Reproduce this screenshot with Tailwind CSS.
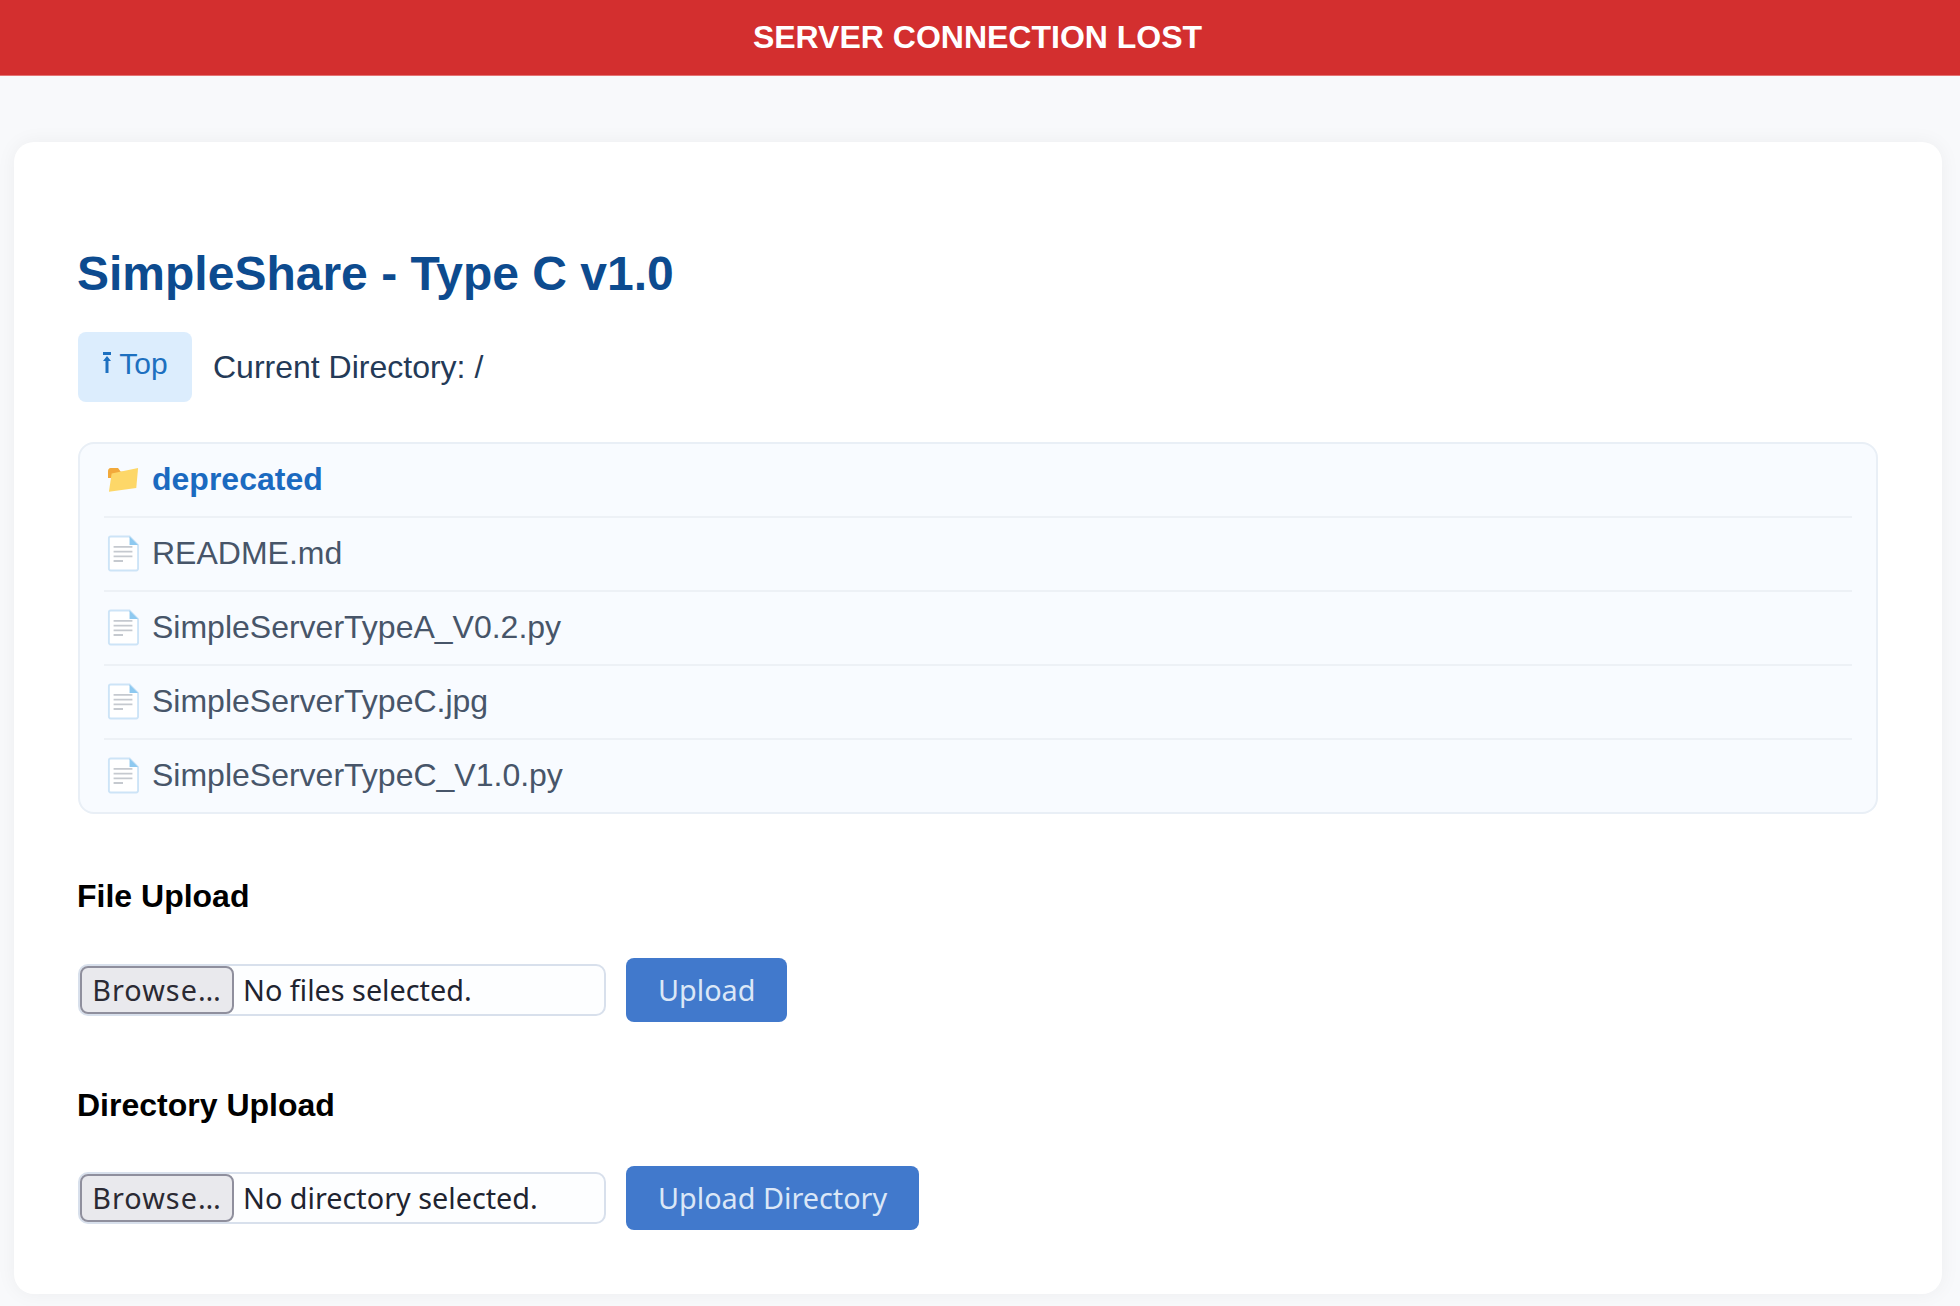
<!DOCTYPE html>
<html lang="en">
<head>
    <meta charset="UTF-8">
    <meta name="viewport" content="width=device-width, initial-scale=1.0">
    <title>SimpleShare - Type C v1.0</title>
    <script src="https://cdn.jsdelivr.net/npm/@tailwindcss/browser@4"></script>
</head>
<body class="bg-[#f8f9fb] font-['Liberation_Sans',sans-serif] h-[1306px] overflow-hidden">
    <div class="h-[76px] bg-[#d32f2f] border-b border-[#e57373] flex items-center justify-center pr-[5px] pb-[2px] text-white font-bold text-[32px]">SERVER CONNECTION LOST</div>

    <div class="ml-[14px] mr-[18px] mt-[66px] h-[1152px] bg-white rounded-[20px] shadow-[0_0_20px_rgba(0,0,0,0.05)] px-[64px] pt-[104px]">
        <h1 class="-ml-[1px] text-[#0d4b8f] font-bold text-[48px] leading-[56px]">SimpleShare - Type C v1.0</h1>

        <div class="flex items-center mt-[30px]">
            <a class="w-[114px] h-[70px] bg-[#dcedfd] rounded-lg flex items-center justify-center gap-[7px] pb-[8px] text-[#1d70c0] text-[30px]">
                <svg class="w-[10px] h-[22px]" viewBox="0 0 10 22" fill="#1d70c0"><rect x="1" y="0" width="8" height="3"/><path d="M5 4 9 9H6.5V21H3.5V9H1Z"/></svg>
                <span>Top</span>
            </a>
            <span class="ml-[21px] text-[#243a57] text-[32px]">Current Directory: /</span>
        </div>

        <div class="mt-[40px] h-[372px] bg-[#f8fbff] border-2 border-[#e9eff6] rounded-[16px] px-[24px]">
            <div class="h-[74px] pb-[3px] border-b-2 border-[#edf1f6] flex items-center gap-[12px]">
                <svg class="w-[31px] h-[30px] ml-[4px] mr-[1px]" viewBox="0 0 34 30"><path d="M0 7 Q0 3 3 3H11L14 7H30V14H0Z" fill="#f2a93b"/><path d="M4 9 33 3 31 25 1 29Z" fill="#fdd768"/></svg>
                <span class="text-[#1b6ac0] font-bold text-[32px]">deprecated</span>
            </div>
            <div class="h-[74px] pb-[2px] border-b-2 border-[#edf1f6] flex items-center gap-[12px]">
                <svg class="w-[32px] h-[37px] ml-[3px] mr-[1px]" viewBox="0 0 34 38"><path d="M2 3Q2 1 4 1H24L33 10V35Q33 37 31 37H4Q2 37 2 35Z" fill="#fff" stroke="#cde4f7" stroke-width="2"/><path d="M24 1 33 10H24Z" fill="#8ec9f0"/><path d="M7 12H27M7 17H27M7 22H27M7 27H17" stroke="#c5c9cf" stroke-width="2"/></svg>
                <span class="text-[#475569] text-[32px]">README.md</span>
            </div>
            <div class="h-[74px] pb-[2px] border-b-2 border-[#edf1f6] flex items-center gap-[12px]">
                <svg class="w-[32px] h-[37px] ml-[3px] mr-[1px]" viewBox="0 0 34 38"><path d="M2 3Q2 1 4 1H24L33 10V35Q33 37 31 37H4Q2 37 2 35Z" fill="#fff" stroke="#cde4f7" stroke-width="2"/><path d="M24 1 33 10H24Z" fill="#8ec9f0"/><path d="M7 12H27M7 17H27M7 22H27M7 27H17" stroke="#c5c9cf" stroke-width="2"/></svg>
                <span class="text-[#475569] text-[32px]">SimpleServerTypeA_V0.2.py</span>
            </div>
            <div class="h-[74px] pb-[2px] border-b-2 border-[#edf1f6] flex items-center gap-[12px]">
                <svg class="w-[32px] h-[37px] ml-[3px] mr-[1px]" viewBox="0 0 34 38"><path d="M2 3Q2 1 4 1H24L33 10V35Q33 37 31 37H4Q2 37 2 35Z" fill="#fff" stroke="#cde4f7" stroke-width="2"/><path d="M24 1 33 10H24Z" fill="#8ec9f0"/><path d="M7 12H27M7 17H27M7 22H27M7 27H17" stroke="#c5c9cf" stroke-width="2"/></svg>
                <span class="text-[#475569] text-[32px]">SimpleServerTypeC.jpg</span>
            </div>
            <div class="h-[72px] pb-[2px] flex items-center gap-[12px]">
                <svg class="w-[32px] h-[37px] ml-[3px] mr-[1px]" viewBox="0 0 34 38"><path d="M2 3Q2 1 4 1H24L33 10V35Q33 37 31 37H4Q2 37 2 35Z" fill="#fff" stroke="#cde4f7" stroke-width="2"/><path d="M24 1 33 10H24Z" fill="#8ec9f0"/><path d="M7 12H27M7 17H27M7 22H27M7 27H17" stroke="#c5c9cf" stroke-width="2"/></svg>
                <span class="text-[#475569] text-[32px]">SimpleServerTypeC_V1.0.py</span>
            </div>
        </div>

        <h3 class="-ml-[1px] mt-[62px] text-black font-bold text-[32px] leading-[40px]">File Upload</h3>
        <div class="flex items-center gap-[20px] mt-[42px] font-['Noto_Sans',sans-serif] text-[28.8px]">
            <div class="w-[528px] h-[52px] border-2 border-[#d8e0ec] rounded-[10px] flex items-center bg-[#fdfeff]">
                <span class="w-[154px] h-[48px] pb-[1px] bg-[#e9e9ed] border-2 border-[#8f8f9d] rounded-[8px] flex items-center justify-center tracking-[1px] text-[#2b2a33]">Browse…</span>
                <span class="ml-[9px] pb-[1px] text-[#1f2430]">No files selected.</span>
            </div>
            <span class="h-[64px] px-[32px] bg-[#4179cc] rounded-lg flex items-center text-[#dbe7f7]">Upload</span>
        </div>

        <h3 class="-ml-[1px] mt-[63px] text-black font-bold text-[32px] leading-[40px]">Directory Upload</h3>
        <div class="flex items-center gap-[20px] mt-[41px] font-['Noto_Sans',sans-serif] text-[28.8px]">
            <div class="w-[528px] h-[52px] border-2 border-[#d8e0ec] rounded-[10px] flex items-center bg-[#fdfeff]">
                <span class="w-[154px] h-[48px] pb-[1px] bg-[#e9e9ed] border-2 border-[#8f8f9d] rounded-[8px] flex items-center justify-center tracking-[1px] text-[#2b2a33]">Browse…</span>
                <span class="ml-[9px] pb-[1px] text-[#1f2430]">No directory selected.</span>
            </div>
            <span class="h-[64px] px-[32px] bg-[#4179cc] rounded-lg flex items-center text-[#dbe7f7]">Upload Directory</span>
        </div>
    </div>
</body>
</html>
